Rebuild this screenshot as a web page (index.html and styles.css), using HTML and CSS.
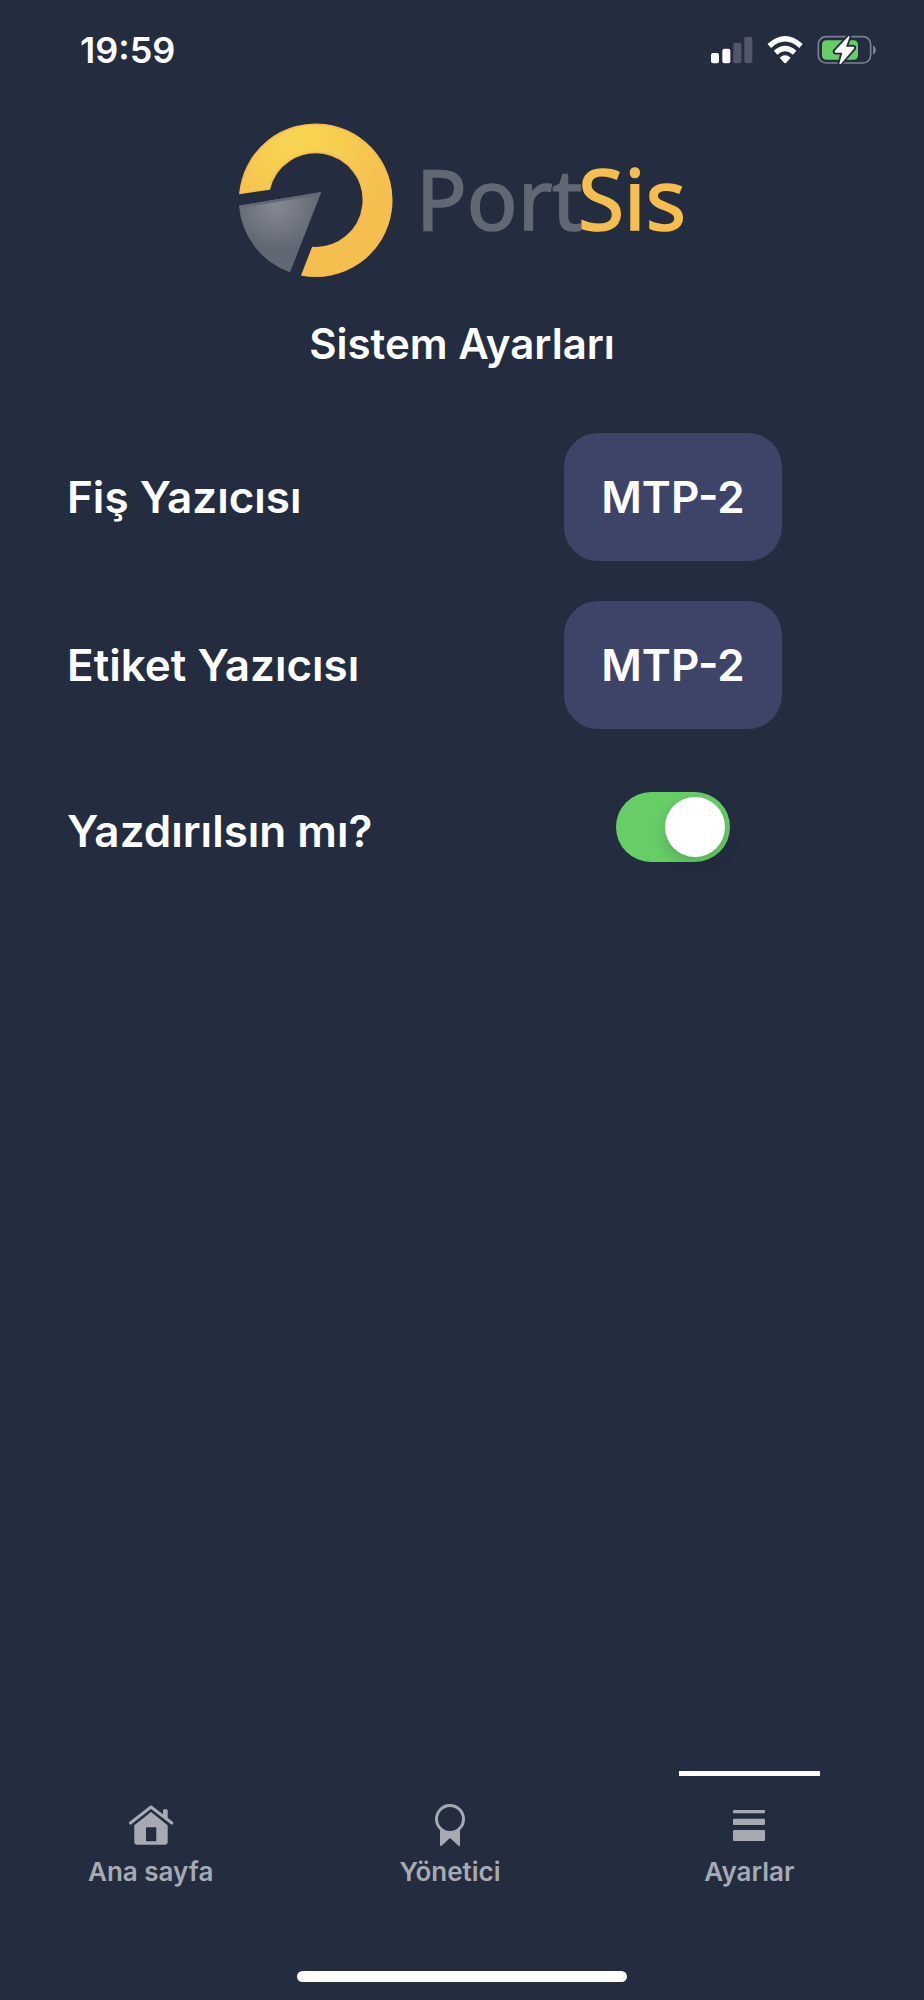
FILE: index.html
```html
<!DOCTYPE html>
<html lang="tr">
<head>
<meta charset="utf-8">
<meta name="viewport" content="width=device-width, initial-scale=1">
<title>PortSis – Sistem Ayarları</title>
<link rel="stylesheet" href="styles.css">
</head>
<body class="screen">
<header class="status">
  <time class="status-time">19:59</time>
  <div class="status-icons">
    <svg class="signal" viewBox="65 49 126 84" aria-hidden="true">
      <g fill="#fff"><rect x="65" y="100" width="24" height="31" rx="6"/><rect x="99" y="87" width="24" height="44" rx="6"/></g>
      <g fill="#50586a"><rect x="132" y="69" width="24" height="62" rx="6"/><rect x="165" y="51" width="24" height="80" rx="6"/></g>
    </svg>
    <svg class="wifi" viewBox="231 49 108 84" aria-hidden="true" fill="none" stroke="#fff">
      <path stroke-width="16" d="M238 79Q285 36 333 79"/>
      <path stroke-width="16" d="M257 99Q285 74 314 99"/>
      <path fill="#fff" stroke="none" d="M269 114Q285 100 302 114L288 130Q285 132 283 130Z"/>
    </svg>
    <svg class="battery" viewBox="381 46 180 90" aria-hidden="true">
      <rect x="385" y="51" width="157" height="79" rx="23" fill="none" stroke="#7b8190" stroke-width="5"/>
      <path fill="#7b8190" d="M549 77Q558 82 558 91Q558 100 549 105Z"/>
      <rect x="396" y="62" width="108" height="58" rx="13" fill="#67ce67"/>
      <path fill="#fff" stroke="#242c40" stroke-width="11" paint-order="stroke" stroke-linejoin="round" d="M476 49L434 94Q432 99 438 99H457L448 132Q449 136 453 132L493 86Q494 81 489 81H468L479 51Z"/>
    </svg>
  </div>
</header>

<main class="content">
  <svg class="logo" viewBox="51 37 1350 468" role="img" aria-label="PortSis">
    <defs>
      <radialGradient id="gold" gradientUnits="userSpaceOnUse" cx="240" cy="90" r="290">
        <stop offset="0" stop-color="#f8d650"/><stop offset="1" stop-color="#f5bf4f"/>
      </radialGradient>
      <radialGradient id="steel" gradientUnits="userSpaceOnUse" cx="170" cy="285" r="135">
        <stop offset="0" stop-color="#858993"/><stop offset="1" stop-color="#626873"/>
      </radialGradient>
    </defs>
    <path fill="url(#gold)" stroke="#f5bd50" stroke-width="5" d="M60 251A228 228 0 1 1 246 496L278 414A143 143 0 1 0 148 238Z"/>
    <path fill="url(#steel)" d="M57 288L304 247L210 488A230 230 0 0 1 57 288Z"/>
    <path fill="#626873" d="M57 288L304 247L295 256L59 295Z"/>
    <text class="logo-text logo-port" x="1088" y="361" text-anchor="end">Port</text>
    <text class="logo-text logo-sis" x="1074" y="361">Sis</text>
  </svg>
  <h1 class="title">Sistem Ayarları</h1>

  <div class="settings">
    <div class="row">
      <label class="row-label" for="receipt">Fiş Yazıcısı</label>
      <div class="row-control"><button class="printer" id="receipt" type="button">MTP-2</button></div>
    </div>
    <div class="row">
      <label class="row-label" for="tag">Etiket Yazıcısı</label>
      <div class="row-control"><button class="printer" id="tag" type="button">MTP-2</button></div>
    </div>
    <div class="row row-switch">
      <label class="row-label" for="print">Yazdırılsın mı?</label>
      <div class="row-control"><input class="switch" id="print" type="checkbox" role="switch" checked></div>
    </div>
  </div>
</main>

<nav class="tabs">
  <a class="tab" href="#home">
    <svg class="tab-icon" viewBox="0 0 48 44" aria-hidden="true">
      <path fill="currentColor" fill-rule="evenodd" d="M24 9L40.700 22.300V38.700Q40.700 41.700 37.700 41.700H10.300Q7.300 41.700 7.300 38.700V22.300ZM19.500 24.300Q19 24.300 19 25V37.700Q19 38.300 19.500 38.300H28.700Q29.300 38.300 29.300 37.700V25Q29.300 24.300 28.700 24.300Z"/>
      <path fill="currentColor" d="M36 13V7.500Q36 6.300 37.200 6.300H39.500Q40.700 6.300 40.700 7.500V17Z"/>
      <path fill="none" stroke="currentColor" stroke-width="3" stroke-linecap="round" stroke-linejoin="round" d="M3.500 20L24 4L44.800 20"/>
    </svg>
    <span>Ana sayfa</span>
  </a>
  <a class="tab" href="#admin">
    <svg class="tab-icon" viewBox="0 0 48 44" aria-hidden="true">
      <circle cx="24" cy="16" r="13.500" fill="none" stroke="currentColor" stroke-width="3"/>
      <path fill="currentColor" d="M14 25Q24 33 34 25V42.500Q33.500 43.500 32.500 42.700L24 35L15.500 42.700Q14.500 43.500 14 42.500Z"/>
    </svg>
    <span>Yönetici</span>
  </a>
  <a class="tab tab-active" href="#settings" aria-current="page">
    <svg class="tab-icon" viewBox="0 0 48 44" aria-hidden="true" fill="currentColor">
      <rect x="8" y="7" width="32" height="3.300" rx="1"/><rect x="8" y="15.700" width="32" height="6.300" rx="1"/><rect x="8" y="27" width="32" height="11" rx="1"/>
    </svg>
    <span>Ayarlar</span>
  </a>
</nav>
<div class="home-bar"></div>
</body>
</html>
```
FILE: styles.css
```css
* { box-sizing: border-box; }

.screen {
  display: flex;
  flex-direction: column;
  min-height: 100vh;
  margin: 0;
  padding-bottom: 18px;
  background: #242c40;
  color: #fff;
  font-family: Inter, "Liberation Sans", sans-serif;
  font-weight: 600;
}

.status {
  display: flex;
  justify-content: space-between;
  align-items: center;
  height: 100px;
  padding: 0 47px 0 80px;
}
.status-time { font-size: 36px; line-height: 44px; }
.status-icons { display: flex; align-items: center; gap: 14px; }
.signal { width: 42px; height: 28px; }
.wifi { width: 36px; height: 28px; }
.battery { width: 60px; height: 30px; }

.content {
  flex: 1;
  display: flex;
  flex-direction: column;
  align-items: center;
  padding-top: 22px;
}
.logo { display: block; width: 450px; height: 156px; overflow: visible; }
.logo-text {
  font-family: "Noto Sans", "Open Sans", sans-serif;
  font-size: 252px;
  font-weight: 400;
  stroke-width: 5px;
}
.logo-port { fill: #626873; stroke: #626873; }
.logo-sis { fill: #f5bf4f; stroke: #f5bf4f; }
.title { margin: 40px 0 0; font-size: 42px; line-height: 52px; font-weight: 600; }

.settings {
  display: flex;
  flex-direction: column;
  gap: 40px;
  width: 100%;
  margin-top: 63px;
  padding: 0 142px 0 67px;
}
.row { display: flex; justify-content: space-between; align-items: center; }
.row-label { font-size: 44px; line-height: 78px; }
.row-control { display: flex; justify-content: center; width: 218px; }
.row-switch { align-items: flex-start; padding-top: 23px; }

.printer {
  width: 100%;
  height: 128px;
  padding: 0;
  border: 0;
  border-radius: 34px;
  background: #3e4467;
  color: inherit;
  font: inherit;
  font-size: 44px;
}

.switch {
  appearance: none;
  display: flex;
  justify-content: flex-end;
  width: 114px;
  height: 70px;
  margin: 0;
  padding: 5px;
  border-radius: 35px;
  background: #67ce67;
}
.switch::before {
  content: "";
  width: 60px;
  height: 60px;
  border-radius: 50%;
  background: #fff;
  box-shadow: 0 6px 16px rgba(0, 0, 0, 0.16);
}
.switch:not(:checked) { justify-content: flex-start; background: #50586a; }

.tabs {
  display: grid;
  grid-template-columns: repeat(3, 1fr);
  padding: 0 25px 0 1px;
}
.tab {
  display: flex;
  flex-direction: column;
  align-items: center;
  color: #a7aab3;
  font-size: 26px;
  line-height: 32px;
  text-decoration: none;
}
.tab::before { content: ""; width: 141px; height: 5px; margin-bottom: 27px; }
.tab-active::before { background: #fff; }
.tab-icon { width: 48px; height: 44px; margin-bottom: 9px; }

.home-bar {
  align-self: center;
  width: 330px;
  height: 11px;
  margin-top: 83px;
  border-radius: 6px;
  background: #fff;
}
```
